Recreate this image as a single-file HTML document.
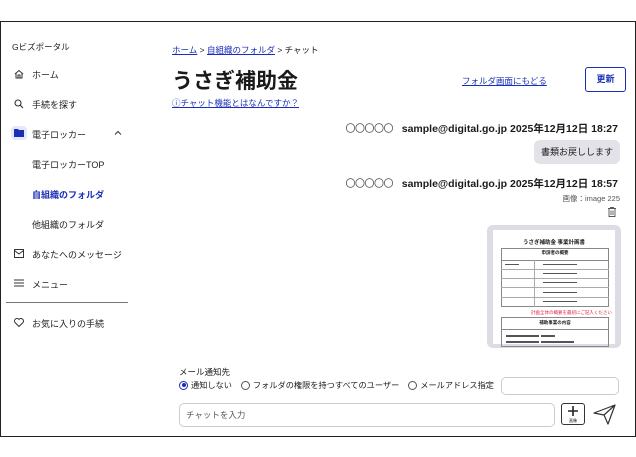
<!DOCTYPE html>
<html><head><meta charset="utf-8"><style>
*{margin:0;padding:0;box-sizing:border-box}
body{width:636px;height:457px;background:#fff;font-family:"Liberation Sans","Noto Sans CJK JP",sans-serif;color:#1a1a1a;position:relative;overflow:hidden}
.frame{position:absolute;left:0;top:21px;width:636px;height:416px;border:1.5px solid #222;border-left-width:1.5px}
.a{position:absolute;white-space:nowrap}
.nav{font-size:9px;color:#222}
.blue{color:#1a2fb8}
.ic{position:absolute}
</style></head><body>
<div class="frame"></div>
<div class="a nav" style="left:12px;top:41px;font-size:8.5px">Gビズポータル</div>
<svg class="ic" style="left:14px;top:69px" width="10" height="10" viewBox="0 0 10 10"><path d="M1 5L5 1.5L9 5M2 4.5V9H8V4.5M4 9V6H6V9" fill="none" stroke="#333" stroke-width="1"/></svg>
<div class="a nav" style="left:32px;top:68px">ホーム</div>
<svg class="ic" style="left:14px;top:99px" width="10" height="10" viewBox="0 0 10 10"><circle cx="4" cy="4" r="3" fill="none" stroke="#333" stroke-width="1.1"/><path d="M6.2 6.2L9 9" stroke="#333" stroke-width="1.1"/></svg>
<div class="a nav" style="left:32px;top:98px">手続を探す</div>
<div class="ic" style="left:11px;top:126px;width:16px;height:14px;background:#e3e8fb;border-radius:4px"></div>
<svg class="ic" style="left:14px;top:129px" width="10" height="8" viewBox="0 0 10 8"><path d="M0 0H4L5 1H10V8H0Z" fill="#1a2fb8"/></svg>
<div class="a nav" style="left:32px;top:128px">電子ロッカー</div>
<svg class="ic" style="left:114px;top:130px" width="8" height="5" viewBox="0 0 8 5"><path d="M1 4.5L4 1.5L7 4.5" fill="none" stroke="#333" stroke-width="1"/></svg>
<div class="a nav" style="left:32px;top:158px">電子ロッカーTOP</div>
<div class="a nav blue" style="left:32px;top:188px;font-weight:bold">自組織のフォルダ</div>
<div class="a nav" style="left:32px;top:218px">他組織のフォルダ</div>
<svg class="ic" style="left:14px;top:249px" width="10" height="9" viewBox="0 0 10 9"><rect x=".5" y=".5" width="9" height="8" fill="none" stroke="#333"/><path d="M.5 1.5L5 5L9.5 1.5" fill="none" stroke="#333"/></svg>
<div class="a nav" style="left:32px;top:248px">あなたへのメッセージ</div>
<svg class="ic" style="left:14px;top:279px" width="10" height="8" viewBox="0 0 10 8"><path d="M0 1H10M0 4H10M0 7H10" stroke="#333"/></svg>
<div class="a nav" style="left:32px;top:278px">メニュー</div>
<div class="ic" style="left:6px;top:302px;width:122px;height:1px;background:#777"></div>
<svg class="ic" style="left:14px;top:318px" width="10" height="9" viewBox="0 0 10 9"><path d="M5 8.5L1 4.5A2.2 2.2 0 0 1 5 1.5A2.2 2.2 0 0 1 9 4.5Z" fill="none" stroke="#333"/></svg>
<div class="a nav" style="left:32px;top:317px">お気に入りの手続</div>

<div class="a" style="left:172px;top:44px;font-size:8.5px"><span class="blue" style="text-decoration:underline">ホーム</span> &gt; <span class="blue" style="text-decoration:underline">自組織のフォルダ</span> &gt; チャット</div>
<div class="a" style="left:172px;top:65px;font-size:21px;font-weight:bold">うさぎ補助金</div>
<div class="a blue" style="left:172px;top:97px;font-size:8.5px;text-decoration:underline">ⓘチャット機能とはなんですか？</div>
<div class="a blue" style="left:462px;top:75px;font-size:8.5px;text-decoration:underline">フォルダ画面にもどる</div>
<div class="a blue" style="left:585px;top:67px;width:41px;height:25px;border:1.2px solid #1a2fb8;border-radius:3px;font-size:9px;font-weight:bold;text-align:center;line-height:23px">更新</div>

<div class="a" style="right:18px;top:120px;font-size:10.5px"><span style="color:#555;font-family:'Noto Sans CJK JP',sans-serif;font-size:10px;letter-spacing:-0.5px">〇〇〇〇〇</span>&nbsp;&nbsp; <b>sample@digital.go.jp 2025年12月12日 18:27</b></div>
<div class="a" style="right:16px;top:140px;height:24px;padding:0 7px;background:#e2e2e8;border-radius:6px;font-size:9px;line-height:24px">書類お戻しします</div>
<div class="a" style="right:18px;top:175px;font-size:10.5px"><span style="color:#555;font-family:'Noto Sans CJK JP',sans-serif;font-size:10px;letter-spacing:-0.5px">〇〇〇〇〇</span>&nbsp;&nbsp; <b>sample@digital.go.jp 2025年12月12日 18:57</b></div>
<div class="a" style="right:16px;top:193px;font-size:7.5px;color:#555">画像：image 225</div>
<svg class="ic" style="left:608px;top:207px" width="8" height="10" viewBox="0 0 8 10"><path d="M0 1.5H8M2.5 1.5V.5H5.5V1.5M1 1.5V9.5H7V1.5M3 3.5V8M5 3.5V8" fill="none" stroke="#555" stroke-width=".9"/></svg>
<div class="ic" style="left:487px;top:225px;width:134px;height:123px;background:#dcdce4;border-radius:6px"></div>
<div class="ic" style="left:493px;top:230px;width:122px;height:114px;background:#fff;font-size:5px">
 <div class="a" style="left:0;width:122px;top:8px;text-align:center;font-weight:bold;font-size:5.5px">うさぎ補助金 事業計画書</div>
 <div class="a" style="left:8px;top:18px;width:108px;height:59px;border:1px solid #888"></div>
 <div class="a" style="left:8px;width:108px;top:20px;text-align:center;font-weight:bold;font-size:4.5px">申請者の概要</div>
 <div class="a" style="left:8px;top:30px;width:108px;height:1px;background:#888"></div>
 <div class="a" style="left:8px;top:39px;width:108px;height:1px;background:#aaa"></div>
 <div class="a" style="left:8px;top:48px;width:108px;height:1px;background:#aaa"></div>
 <div class="a" style="left:8px;top:57px;width:108px;height:1px;background:#aaa"></div>
 <div class="a" style="left:8px;top:67px;width:108px;height:1px;background:#aaa"></div>
 <div class="a" style="left:41px;top:30px;width:1px;height:47px;background:#aaa"></div>
 <div class="a" style="left:12px;top:34px;width:14px;height:1px;background:#555"></div>
 <div class="a" style="left:50px;top:34px;width:34px;height:1px;background:#555"></div>
 <div class="a" style="left:50px;top:43px;width:34px;height:1px;background:#555"></div>
 <div class="a" style="left:50px;top:52px;width:34px;height:1px;background:#555"></div>
 <div class="a" style="left:50px;top:62px;width:34px;height:1px;background:#555"></div>
 <div class="a" style="left:50px;top:71px;width:34px;height:1px;background:#555"></div>
 <div class="a" style="left:38px;top:80px;color:#e02040;font-size:4.5px">計画全体の概要を最初にご記入ください</div>
 <div class="a" style="left:8px;top:87px;width:108px;height:30px;border:1px solid #888"></div>
 <div class="a" style="left:8px;width:108px;top:90px;text-align:center;font-weight:bold;font-size:4.5px">補助事業の内容</div>
 <div class="a" style="left:8px;top:99px;width:108px;height:1px;background:#888"></div>
 <div class="a" style="left:13px;top:105px;width:33px;height:1.5px;background:#555"></div>
 <div class="a" style="left:48px;top:105px;width:14px;height:1.5px;background:#555"></div>
 <div class="a" style="left:13px;top:111px;width:33px;height:1.5px;background:#555"></div>
 <div class="a" style="left:48px;top:111px;width:33px;height:1.5px;background:#555"></div>
</div>

<div class="a" style="left:179px;top:366px;font-size:8.5px">メール通知先</div>
<div class="a" style="left:179px;top:379px;font-size:8.2px;display:flex;align-items:center">
<span style="display:inline-block;width:9px;height:9px;border:1px solid #1a2fb8;border-radius:50%;position:relative;margin-right:3px"><span style="position:absolute;left:1.5px;top:1.5px;width:4px;height:4px;border-radius:50%;background:#1a2fb8"></span></span>通知しない
<span style="display:inline-block;width:9px;height:9px;border:1px solid #555;border-radius:50%;margin:0 3px 0 9px"></span>フォルダの権限を持つすべてのユーザー
<span style="display:inline-block;width:9px;height:9px;border:1px solid #555;border-radius:50%;margin:0 3px 0 9px"></span>メールアドレス指定</div>
<div class="ic" style="left:501px;top:377px;width:118px;height:18px;border:1px solid #ccc;border-radius:5px"></div>
<div class="ic" style="left:179px;top:403px;width:376px;height:24px;border:1px solid #ccc;border-radius:5px"></div>
<div class="a" style="left:186px;top:409px;font-size:8.5px;color:#555">チャットを入力</div>
<div class="ic" style="left:561px;top:403px;width:24px;height:22px;border:1px solid #333;border-radius:3px"></div>
<svg class="ic" style="left:567px;top:405px" width="12" height="12" viewBox="0 0 12 12"><path d="M6 1V11M1 6H11" stroke="#222" stroke-width="1.6"/></svg>
<div class="a" style="left:561px;top:418px;width:24px;text-align:center;font-size:4px">画像</div>
<svg class="ic" style="left:593px;top:403px" width="24" height="22" viewBox="0 0 24 22"><path d="M1 10L22 2L15 21L11 12Z M11 12L22 2" fill="none" stroke="#333" stroke-width="1.2" stroke-linejoin="round"/></svg>
</body></html>
